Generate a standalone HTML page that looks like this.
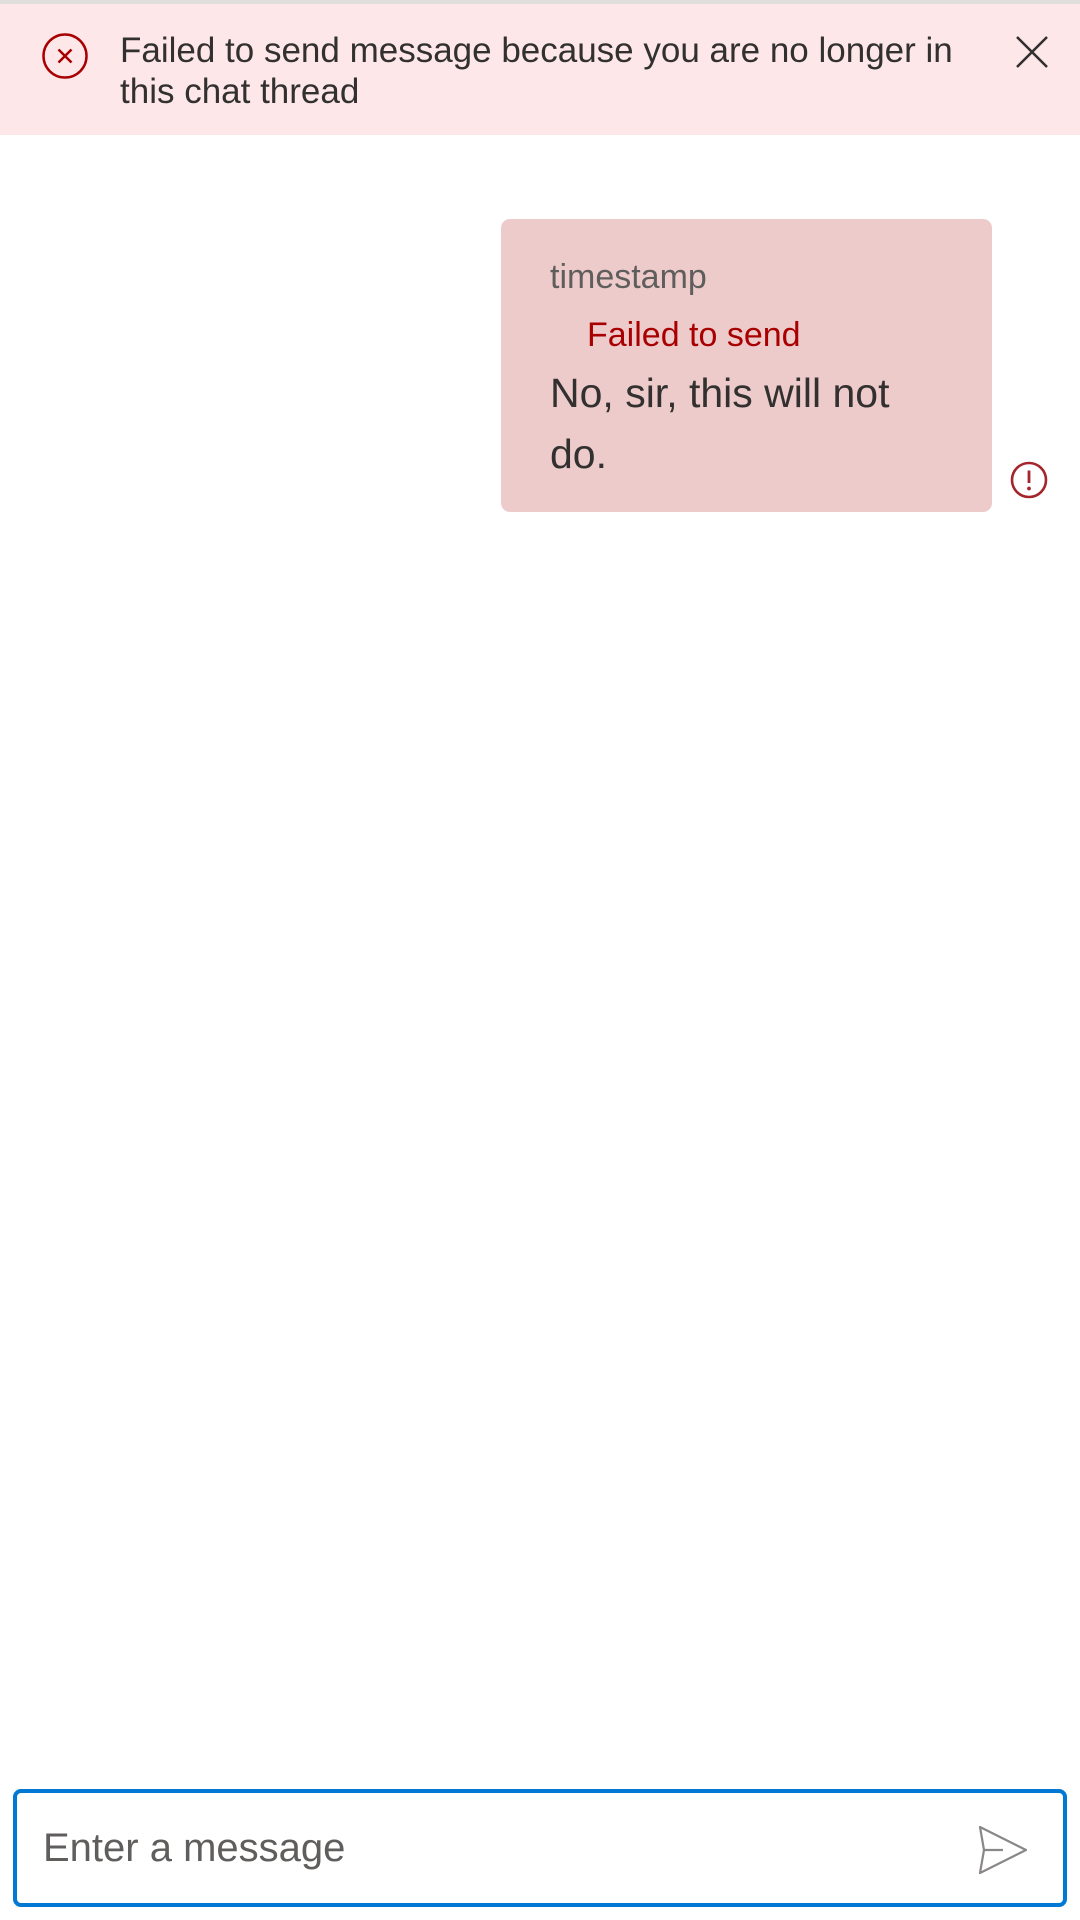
<!DOCTYPE html>
<html><head><meta charset="utf-8"><style>
html,body{margin:0;padding:0;width:1080px;height:1920px;background:#fff;overflow:hidden;font-family:"Liberation Sans",sans-serif;}
.top{position:absolute;left:0;top:0;width:1080px;height:4px;background:#e1dfdd;}
.banner{position:absolute;left:0;top:4px;width:1080px;height:131px;background:#fde7e9;}
.btext{position:absolute;left:120px;top:26px;width:870px;font-size:35px;line-height:41px;color:#323130;}
.bubble{position:absolute;left:501px;top:219px;width:491px;height:293px;background:#eecbcb;border-radius:9px;}
.ts{position:absolute;left:49px;top:39px;font-size:34px;color:#605e5c;}
.fs{position:absolute;left:86px;top:97px;font-size:34px;color:#a80000;}
.msg{position:absolute;left:49px;top:144px;width:380px;font-size:41px;line-height:61px;color:#323130;}
.input{position:absolute;left:13px;top:1789px;width:1046px;height:110px;border:4px solid #0078d4;border-radius:8px;}
.ph{position:absolute;left:26px;top:33px;font-size:40px;color:#605e5c;}
</style></head><body>
<div class="top"></div>
<div class="banner">
<svg style="position:absolute;left:41px;top:28px" width="48" height="48" viewBox="0 0 48 48"><circle cx="24" cy="24" r="21.5" fill="none" stroke="#a80000" stroke-width="2.5"/><path d="M17.5 17.5L30.5 30.5M30.5 17.5L17.5 30.5" stroke="#a80000" stroke-width="2.5"/></svg>
<div class="btext">Failed to send message because you are no longer in this chat thread</div>
<svg style="position:absolute;left:1015px;top:31px" width="34" height="34" viewBox="0 0 34 34"><path d="M2 2L32 32M32 2L2 32" stroke="#323130" stroke-width="2.6"/></svg>
</div>
<div class="bubble">
<div class="ts">timestamp</div>
<div class="fs">Failed to send</div>
<div class="msg">No, sir, this will not do.</div>
</div>
<svg style="position:absolute;left:1010px;top:461px" width="38" height="38" viewBox="0 0 38 38"><circle cx="19" cy="19" r="17" fill="none" stroke="#a4262c" stroke-width="2.6"/><path d="M19 9.5V22" stroke="#a4262c" stroke-width="2.8"/><circle cx="19" cy="27.5" r="1.9" fill="#a4262c"/></svg>
<div class="input">
<div class="ph">Enter a message</div>
<svg style="position:absolute;left:960px;top:31px" width="52" height="52" viewBox="0 0 52 52"><path d="M3 3L49 26L3 49L7 26Z" fill="none" stroke="#8a8886" stroke-width="2.2" stroke-linejoin="round"/><path d="M7 26H26" stroke="#8a8886" stroke-width="2.2"/></svg>
</div>
</body></html>
